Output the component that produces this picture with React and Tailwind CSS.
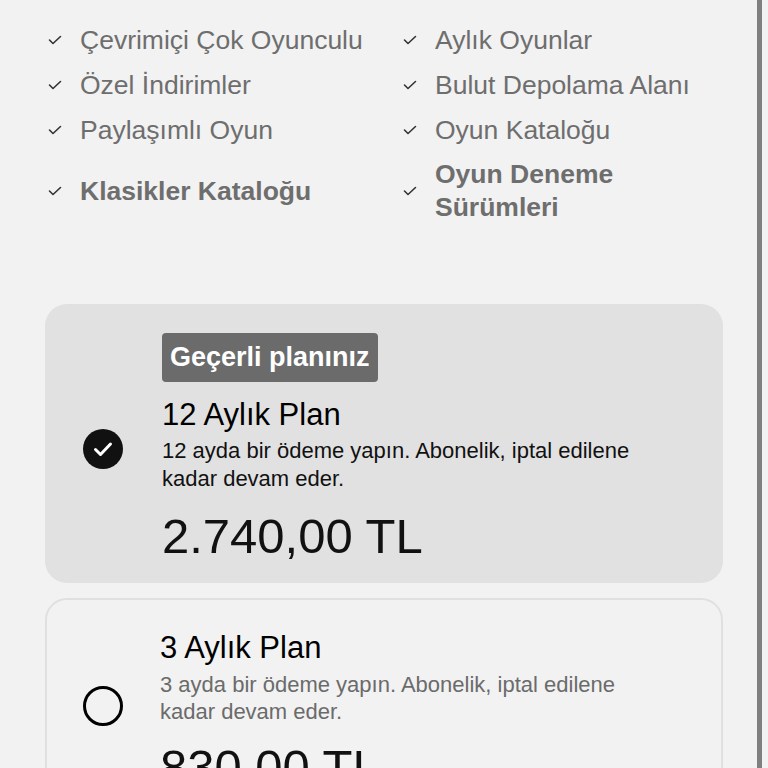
import React from "react";

const features = [
  { text: "Çevrimiçi Çok Oyunculu", bold: false },
  { text: "Aylık Oyunlar", bold: false },
  { text: "Özel İndirimler", bold: false },
  { text: "Bulut Depolama Alanı", bold: false },
  { text: "Paylaşımlı Oyun", bold: false },
  { text: "Oyun Kataloğu", bold: false },
  { text: "Klasikler Kataloğu", bold: true },
  { text: "Oyun Deneme Sürümleri", bold: true },
];

function SmallCheck() {
  return (
    <svg width="14" height="10" viewBox="0 0 14 10" className="shrink-0">
      <path d="M1.5 5 L5 8.5 L12.5 1.5" fill="none" stroke="#333" strokeWidth="1.6" strokeLinecap="round" strokeLinejoin="round" />
    </svg>
  );
}

function Feature({ text, bold }) {
  return (
    <div className="flex items-center gap-[18px]">
      <SmallCheck />
      <span
        className={
          "text-[26.5px] text-[#6e6e6e] " +
          (bold ? "font-bold leading-[33px]" : "leading-[34px]")
        }
      >
        {text}
      </span>
    </div>
  );
}

function CheckedCircle() {
  return (
    <svg width="40" height="40" viewBox="0 0 40 40" className="shrink-0">
      <circle cx="20" cy="20" r="20" fill="#111" />
      <path d="M12.5 20.5 L17.5 25.5 L27.5 15" fill="none" stroke="#fff" strokeWidth="3" strokeLinecap="round" strokeLinejoin="round" />
    </svg>
  );
}

export default function App() {
  return (
    <div
      className="flex h-[768px] overflow-hidden bg-[#f2f2f2]"
      style={{ fontFamily: '"Liberation Sans", Arial, sans-serif' }}
    >
      <div className="w-[757px] shrink-0">
        <div className="grid grid-cols-[355px_320px] gap-y-[11px] ml-[48px] pt-[23px]">
          {features.map((f) => (
            <Feature key={f.text} text={f.text} bold={f.bold} />
          ))}
        </div>

        <div className="ml-[45px] mr-[34px] mt-[80px] flex flex-col gap-[15px]">
          <div className="flex items-center gap-[39px] rounded-[22px] bg-[#e1e1e1] pl-[38px] pt-[29px] pb-[19px]">
            <CheckedCircle />
            <div className="flex flex-col">
              <div className="self-start rounded-[4px] bg-[#6b6b6b] px-[8px] h-[49px] flex items-center text-[27px] font-bold text-white">
                Geçerli planınız
              </div>
              <div className="mt-[15px] text-[31px] leading-[36px] text-black">12 Aylık Plan</div>
              <div className="mt-[4px] text-[22px] leading-[28px] text-[#111] pr-[60px]">
                12 ayda bir ödeme yapın. Abonelik, iptal edilene kadar devam eder.
              </div>
              <div className="mt-[15px] text-[49px] leading-[56px] text-[#111]">2.740,00 TL</div>
            </div>
          </div>

          <div className="flex items-start gap-[37px] rounded-[22px] border-[2px] border-[#e0e0e0] bg-[#f2f2f2] pl-[36px] pt-[30px] pb-[19px]">
            <div className="mt-[56px] w-10 h-10 shrink-0 rounded-full border-[3px] border-black" />
            <div className="flex flex-col">
              <div className="text-[31px] leading-[36px] text-black">3 Aylık Plan</div>
              <div className="mt-[5px] text-[22px] leading-[27px] text-[#6b6b6b] pr-[70px]">
                3 ayda bir ödeme yapın. Abonelik, iptal edilene kadar devam eder.
              </div>
              <div className="mt-[14px] text-[49px] leading-[56px] text-[#111]">830,00 TL</div>
            </div>
          </div>
        </div>
      </div>
      <div className="w-[5px] shrink-0 bg-[#7f7f7f]" />
      <div className="flex-1 bg-[#f2f2f2]" />
    </div>
  );
}
